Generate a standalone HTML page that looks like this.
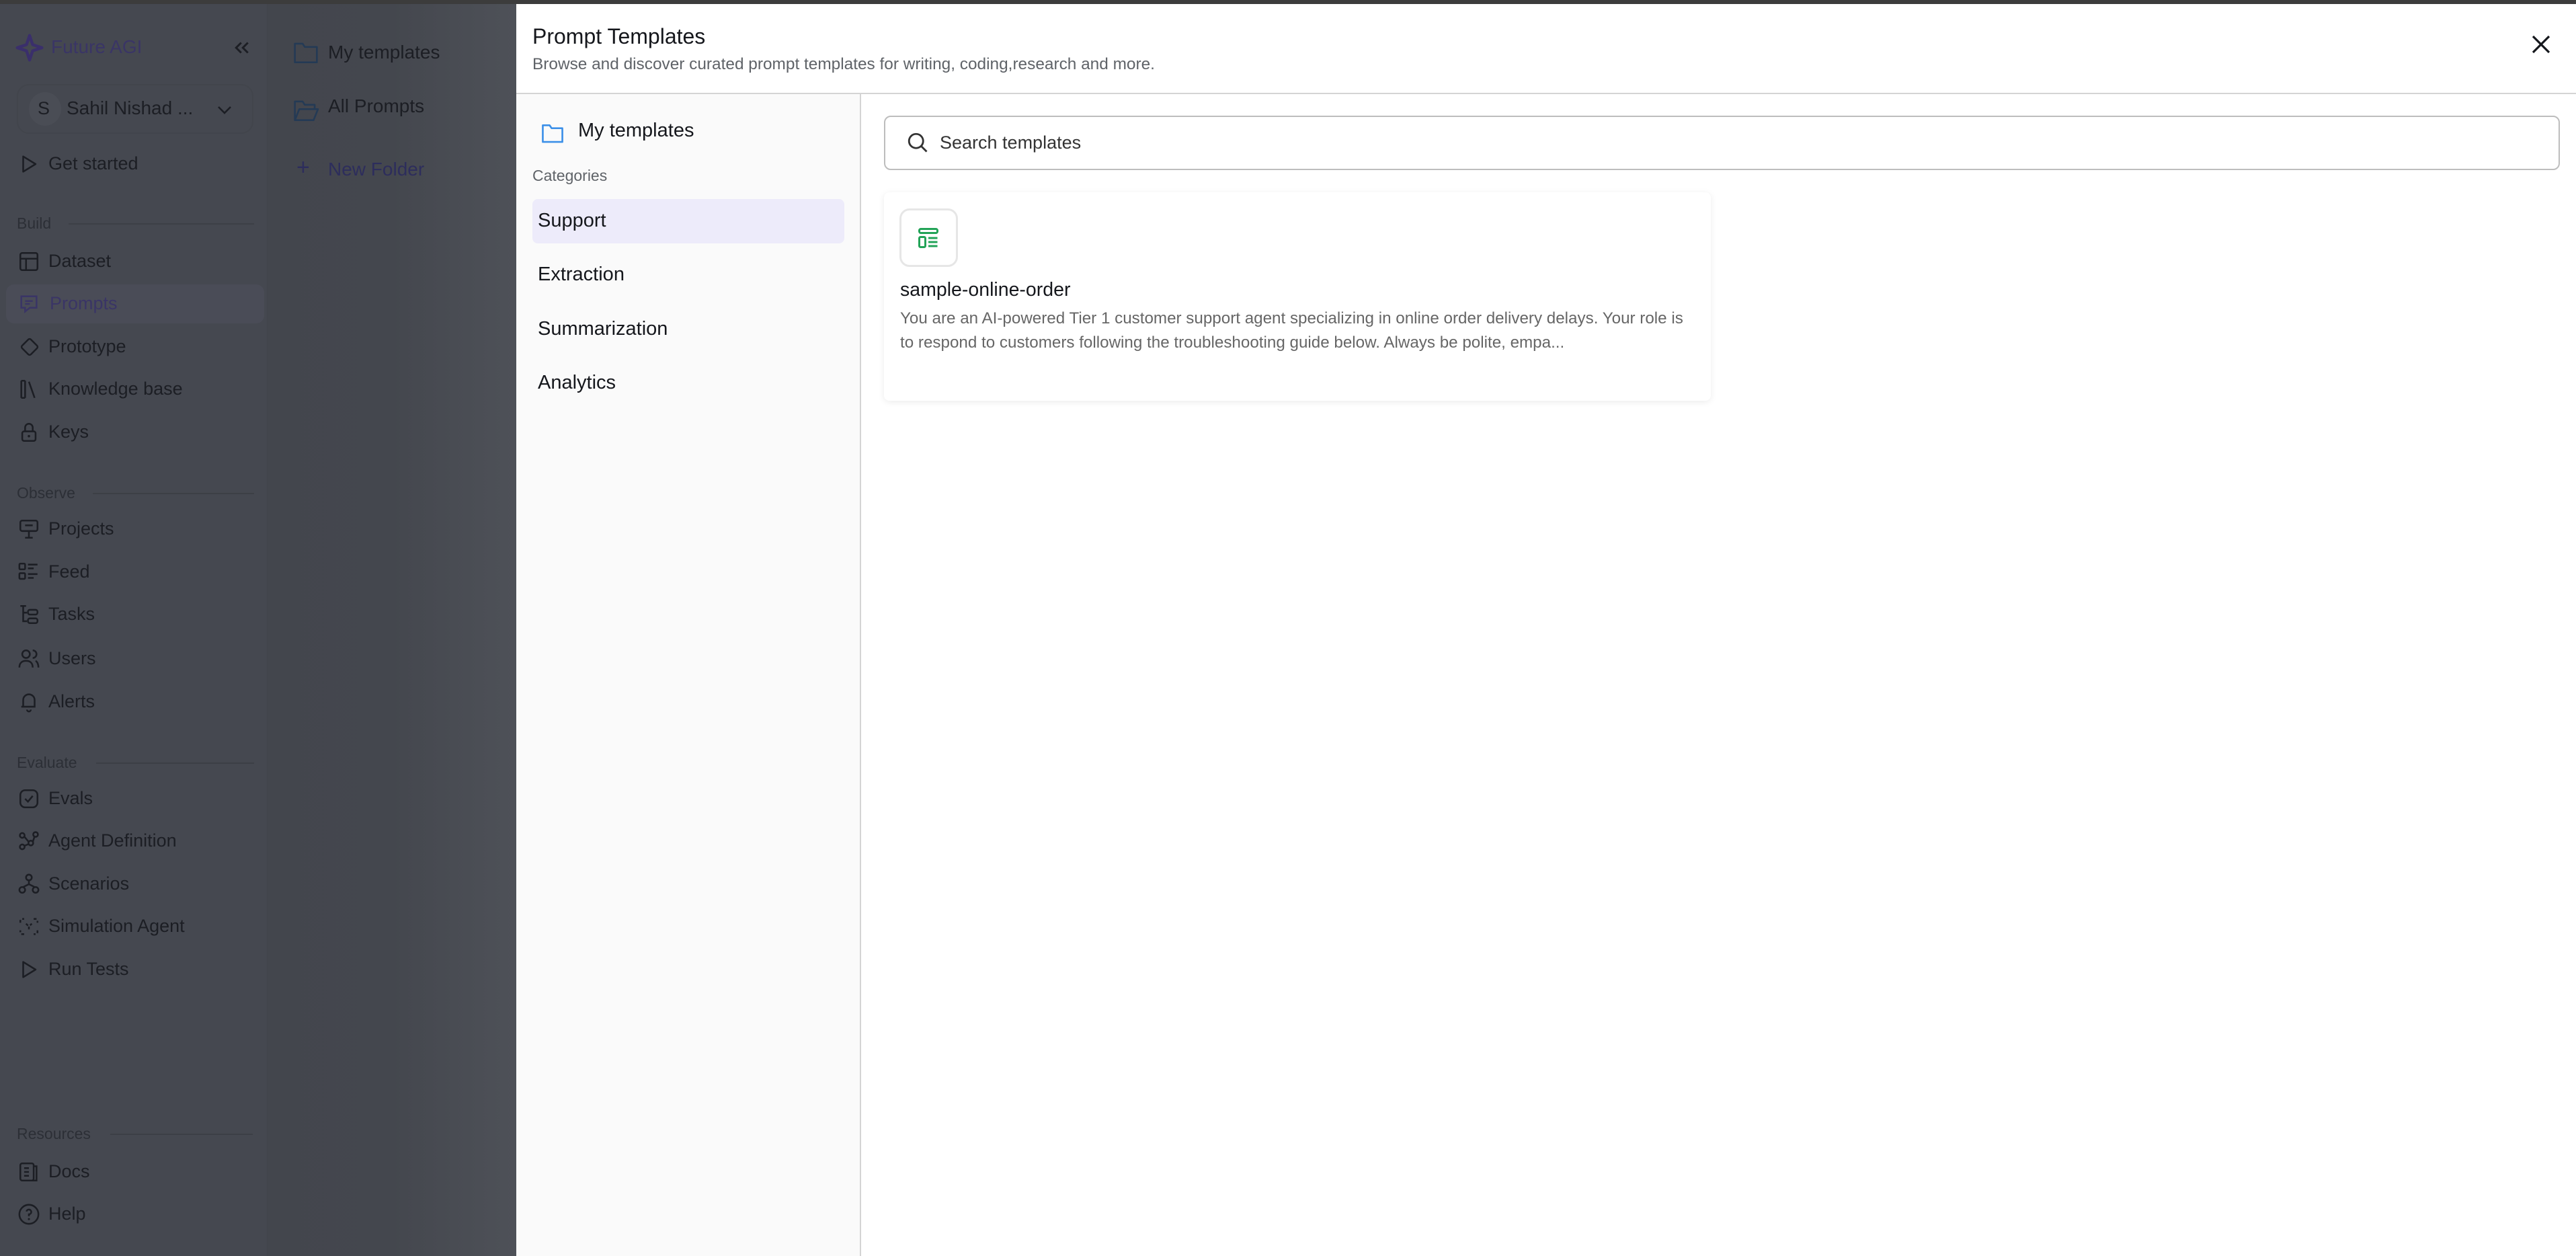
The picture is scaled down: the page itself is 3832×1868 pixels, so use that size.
<!DOCTYPE html>
<html><head><meta charset="utf-8"><style>
*{box-sizing:border-box;margin:0;padding:0}
body{width:3832px;height:1868px;overflow:hidden;font-family:"Liberation Sans",sans-serif;background:#3c3c3c;position:relative}
.abs{position:absolute;white-space:nowrap}
#side{position:absolute;left:0;top:6px;width:398px;height:1862px;background:#454850;border-right:1px solid #41444b}
#col2{position:absolute;left:398px;top:6px;width:370px;height:1862px;background:linear-gradient(90deg,#43464d 0%,#44474e 50%,#4e5158 100%)}
.si{position:absolute;left:72px;font-size:27px;color:#1c1e24;white-space:nowrap}
.ic{position:absolute;left:26px;width:34px;height:34px}
.sec{position:absolute;left:25px;font-size:23px;color:#2c2f36;white-space:nowrap}
.secl{position:absolute;height:2px;background:#3c3f46}
#modal{position:absolute;left:768px;top:6px;width:3064px;height:1862px;background:#fff}
#lp{position:absolute;left:0;top:134px;width:513px;height:1728px;background:#fafafa;border-right:2px solid #d4d4d4}
.cat{position:absolute;left:32px;font-size:29px;color:#15171c;white-space:nowrap}
</style></head><body>
<div id="side">
  <svg class="abs" style="left:22px;top:43px" width="44" height="44" viewBox="0 0 24 24"><path d="M12 2 L14.5 9.5 L22 12 L14.5 14.5 L12 22 L9.5 14.5 L2 12 L9.5 9.5 Z" fill="none" stroke="#3a2f6b" stroke-width="2.4" stroke-linejoin="round"/></svg>
  <div class="abs" style="left:76px;top:48px;font-size:28px;color:#3a3566">Future AGI</div>
  <svg class="abs" style="left:345px;top:50px" width="30" height="30" viewBox="0 0 24 24"><path d="M11 6 L5 12 L11 18 M19 6 L13 12 L19 18" fill="none" stroke="#1c1e24" stroke-width="2.4"/></svg>
  <div class="abs" style="left:25px;top:119px;width:352px;height:74px;border:2px solid #42454c;border-radius:18px"></div>
  <div class="abs" style="left:43px;top:131px;width:48px;height:50px;border-radius:50%;background:#4a4d55"></div>
  <div class="abs" style="left:56px;top:140px;font-size:27px;color:#1c1e24">S</div>
  <div class="abs" style="left:99px;top:139px;font-size:28px;color:#1c1e24">Sahil Nishad ...</div>
  <svg class="abs" style="left:322px;top:145px" width="24" height="24" viewBox="0 0 24 24"><path d="M3 8 L12 17 L21 8" fill="none" stroke="#1c1e24" stroke-width="2.6"/></svg>

  <svg class="ic" style="top:221px" viewBox="0 0 24 24"><path d="M6 4 L19 12 L6 20 Z" fill="none" stroke="#1c1e24" stroke-width="1.8" stroke-linejoin="round"/></svg>
  <div class="si" style="top:222px">Get started</div>

  <div class="sec" style="top:313px">Build</div><div class="secl" style="left:102px;width:276px;top:326px"></div>
  <svg class="ic" style="top:366px" viewBox="0 0 24 24"><rect x="3" y="3" width="18" height="18" rx="2" fill="none" stroke="#1c1e24" stroke-width="1.8"/><path d="M3 9H21M9 9V21" stroke="#1c1e24" stroke-width="1.8"/></svg>
  <div class="si" style="top:367px">Dataset</div>
  <div class="abs" style="left:9px;top:417px;width:384px;height:58px;border-radius:12px;background:#4a4c57"></div>
  <svg class="ic" style="top:429px" viewBox="0 0 24 24"><path d="M4 4H20V16H13L8 20V16H4Z" fill="none" stroke="#3a3566" stroke-width="1.8"/><path d="M8 9H16M8 12H13" stroke="#3a3566" stroke-width="1.8"/></svg>
  <div class="si" style="top:430px;left:74px;color:#3a3566">Prompts</div>
  <svg class="ic" style="top:493px" viewBox="0 0 24 24"><rect x="6" y="5" width="13" height="13" rx="2" transform="rotate(45 12 12)" fill="none" stroke="#1c1e24" stroke-width="1.8"/></svg>
  <div class="si" style="top:494px">Prototype</div>
  <svg class="ic" style="top:556px" viewBox="0 0 24 24"><path d="M4 3V21M8 3V21M12 4L18 21M4 3H8M4 21H8" fill="none" stroke="#1c1e24" stroke-width="1.8"/></svg>
  <div class="si" style="top:557px">Knowledge base</div>
  <svg class="ic" style="top:620px" viewBox="0 0 24 24"><rect x="5" y="11" width="14" height="10" rx="2" fill="none" stroke="#1c1e24" stroke-width="1.8"/><path d="M8 11V7A4 4 0 0 1 16 7V11" fill="none" stroke="#1c1e24" stroke-width="1.8"/><circle cx="12" cy="16" r="1.3" fill="#1c1e24"/></svg>
  <div class="si" style="top:621px">Keys</div>

  <div class="sec" style="top:714px">Observe</div><div class="secl" style="left:138px;width:240px;top:727px"></div>
  <svg class="ic" style="top:764px" viewBox="0 0 24 24"><rect x="3" y="3" width="18" height="11" rx="2" fill="none" stroke="#1c1e24" stroke-width="1.8"/><path d="M12 14V21M8 21H16M8 8H16" stroke="#1c1e24" stroke-width="1.8"/></svg>
  <div class="si" style="top:765px">Projects</div>
  <svg class="ic" style="top:828px" viewBox="0 0 24 24"><rect x="2" y="3" width="6" height="6" rx="1" fill="none" stroke="#1c1e24" stroke-width="1.8"/><rect x="2" y="13" width="6" height="6" rx="1" fill="none" stroke="#1c1e24" stroke-width="1.8"/><path d="M11 4H21M11 8H17M11 14H21M11 18H17" stroke="#1c1e24" stroke-width="1.8"/></svg>
  <div class="si" style="top:829px">Feed</div>
  <svg class="ic" style="top:891px" viewBox="0 0 24 24"><path d="M3 3H9M6 3V19H10M6 10H10" fill="none" stroke="#1c1e24" stroke-width="1.8"/><rect x="11" y="7" width="10" height="5" rx="2" fill="none" stroke="#1c1e24" stroke-width="1.8"/><rect x="11" y="16" width="10" height="5" rx="2" fill="none" stroke="#1c1e24" stroke-width="1.8"/></svg>
  <div class="si" style="top:892px">Tasks</div>
  <svg class="ic" style="top:957px" viewBox="0 0 24 24"><circle cx="9" cy="7" r="4" fill="none" stroke="#1c1e24" stroke-width="1.8"/><path d="M2 21C2 16 5 14 9 14S16 16 16 21M16 3A4 4 0 0 1 16 11M19 14C21 15 22 18 22 21" fill="none" stroke="#1c1e24" stroke-width="1.8"/></svg>
  <div class="si" style="top:958px">Users</div>
  <svg class="ic" style="top:1021px" viewBox="0 0 24 24"><path d="M6 17V10A6 6 0 0 1 18 10V17H4M10 20A2 2 0 0 0 14 20" fill="none" stroke="#1c1e24" stroke-width="1.8"/></svg>
  <div class="si" style="top:1022px">Alerts</div>

  <div class="sec" style="top:1115px">Evaluate</div><div class="secl" style="left:143px;width:235px;top:1128px"></div>
  <svg class="ic" style="top:1165px" viewBox="0 0 24 24"><rect x="3" y="3" width="18" height="18" rx="5" fill="none" stroke="#1c1e24" stroke-width="1.8"/><path d="M8 12L11 15L16 9" fill="none" stroke="#1c1e24" stroke-width="1.8"/></svg>
  <div class="si" style="top:1166px">Evals</div>
  <svg class="ic" style="top:1228px" viewBox="0 0 24 24"><circle cx="5" cy="6" r="2.5" fill="none" stroke="#1c1e24" stroke-width="1.8"/><circle cx="19" cy="5" r="2.5" fill="none" stroke="#1c1e24" stroke-width="1.8"/><circle cx="5" cy="18" r="2.5" fill="none" stroke="#1c1e24" stroke-width="1.8"/><circle cx="14" cy="14" r="2.5" fill="none" stroke="#1c1e24" stroke-width="1.8"/><path d="M7 7L12 13M7 17L12 15M16 13L18 7" stroke="#1c1e24" stroke-width="1.8"/></svg>
  <div class="si" style="top:1229px">Agent Definition</div>
  <svg class="ic" style="top:1292px" viewBox="0 0 24 24"><circle cx="12" cy="5" r="3" fill="none" stroke="#1c1e24" stroke-width="1.8"/><circle cx="5" cy="18" r="3" fill="none" stroke="#1c1e24" stroke-width="1.8"/><circle cx="19" cy="18" r="3" fill="none" stroke="#1c1e24" stroke-width="1.8"/><path d="M12 8V12M6 15L12 12L18 15" fill="none" stroke="#1c1e24" stroke-width="1.8"/></svg>
  <div class="si" style="top:1293px">Scenarios</div>
  <svg class="ic" style="top:1355px" viewBox="0 0 24 24"><path d="M3 8V4H7M17 4H21V8M21 16V20H17M7 20H3V16M9 9L12 12L15 9M12 12V16" fill="none" stroke="#1c1e24" stroke-width="1.8" stroke-dasharray="3 3"/></svg>
  <div class="si" style="top:1356px">Simulation Agent</div>
  <svg class="ic" style="top:1419px" viewBox="0 0 24 24"><path d="M6 4 L19 12 L6 20 Z" fill="none" stroke="#1c1e24" stroke-width="1.8" stroke-linejoin="round"/></svg>
  <div class="si" style="top:1420px">Run Tests</div>

  <div class="sec" style="top:1667px">Resources</div><div class="secl" style="left:164px;width:212px;top:1680px"></div>
  <svg class="ic" style="top:1720px" viewBox="0 0 24 24"><rect x="3" y="3" width="14" height="18" rx="2" fill="none" stroke="#1c1e24" stroke-width="1.8"/><path d="M17 6H20V21H5M7 8H12M7 12H12M7 16H12" fill="none" stroke="#1c1e24" stroke-width="1.8"/></svg>
  <div class="si" style="top:1721px">Docs</div>
  <svg class="ic" style="top:1783px" viewBox="0 0 24 24"><circle cx="12" cy="12" r="10" fill="none" stroke="#1c1e24" stroke-width="1.8"/><path d="M9.5 9A2.5 2.5 0 1 1 12 12V14" fill="none" stroke="#1c1e24" stroke-width="1.8"/><circle cx="12" cy="17" r="1.1" fill="#1c1e24"/></svg>
  <div class="si" style="top:1784px">Help</div>
</div>

<div id="col2">
  <svg class="abs" style="left:37px;top:54px" width="40" height="36" viewBox="0 0 24 22"><path d="M2 3H9L11 6H22V20H2Z" fill="none" stroke="#243a55" stroke-width="1.6" stroke-linejoin="round"/></svg>
  <div class="abs" style="left:90px;top:56px;font-size:28px;color:#1c1e24">My templates</div>
  <svg class="abs" style="left:37px;top:140px" width="40" height="36" viewBox="0 0 24 22"><path d="M2 20V3H9L11 6H20V10M2 20L6 10H23L19 20Z" fill="none" stroke="#243a55" stroke-width="1.6" stroke-linejoin="round"/></svg>
  <div class="abs" style="left:90px;top:136px;font-size:28px;color:#1c1e24">All Prompts</div>
  <div class="abs" style="left:43px;top:226px;font-size:34px;color:#2d2d5c;line-height:1">+</div>
  <div class="abs" style="left:90px;top:230px;font-size:28px;color:#2d2d5c">New Folder</div>
</div>

<div id="modal">
  <div class="abs" style="left:24px;top:30px;font-size:32px;color:#15171c">Prompt Templates</div>
  <div class="abs" style="left:24px;top:76px;font-size:24.4px;color:#5f6368">Browse and discover curated prompt templates for writing, coding,research and more.</div>
  <svg class="abs" style="left:2996px;top:44px" width="32" height="32" viewBox="0 0 24 24"><path d="M3 3L21 21M21 3L3 21" stroke="#15171c" stroke-width="2.4"/></svg>
  <div class="abs" style="left:0;top:132px;width:3064px;height:2px;background:#d4d4d4"></div>
  <div id="lp">
    <svg class="abs" style="left:36px;top:42px" width="36" height="32" viewBox="0 0 24 22"><path d="M2 3H9L11 6H22V20H2Z" fill="none" stroke="#3b8fe8" stroke-width="1.8" stroke-linejoin="round"/></svg>
    <div class="abs" style="left:92px;top:38px;font-size:29px;color:#15171c">My templates</div>
    <div class="abs" style="left:24px;top:108px;font-size:23px;color:#5f6368">Categories</div>
    <div class="abs" style="left:24px;top:156px;width:464px;height:66px;background:#edebfa;border-radius:8px"></div>
    <div class="cat" style="top:172px">Support</div>
    <div class="cat" style="top:252px">Extraction</div>
    <div class="cat" style="top:333px">Summarization</div>
    <div class="cat" style="top:413px">Analytics</div>
  </div>
  <div class="abs" style="left:547px;top:166px;width:2493px;height:81px;border:2px solid #bdbdbd;border-radius:10px;background:#fff"></div>
  <svg class="abs" style="left:579px;top:188px" width="36" height="36" viewBox="0 0 24 24"><circle cx="10.5" cy="10.5" r="7" fill="none" stroke="#333" stroke-width="1.9"/><path d="M15.5 15.5L21 21" stroke="#333" stroke-width="1.9"/></svg>
  <div class="abs" style="left:630px;top:191px;font-size:27px;color:#333">Search templates</div>
  <div class="abs" style="left:547px;top:280px;width:1230px;height:310px;background:#fff;border-radius:8px;box-shadow:0 2px 10px rgba(0,0,0,0.08)"></div>
  <div class="abs" style="left:570px;top:304px;width:87px;height:87px;border:3px solid #e6e6e6;border-radius:15px;background:#fff"></div>
  <svg class="abs" style="left:595px;top:330px" width="36" height="36" viewBox="0 0 24 24"><rect x="3" y="3" width="18" height="4" rx="1.5" fill="none" stroke="#22a357" stroke-width="2"/><rect x="3" y="11" width="6" height="10" rx="1.2" fill="none" stroke="#22a357" stroke-width="2"/><path d="M12 12H21M12 16H21M12 20H21" stroke="#22a357" stroke-width="2"/></svg>
  <div class="abs" style="left:571px;top:409px;font-size:28.5px;color:#15171c">sample-online-order</div>
  <div class="abs" style="left:571px;top:450px;font-size:24.2px;color:#666;line-height:36px">You are an AI-powered Tier 1 customer support agent specializing in online order delivery delays. Your role is<br>to respond to customers following the troubleshooting guide below. Always be polite, empa...</div>
</div>
</body></html>
